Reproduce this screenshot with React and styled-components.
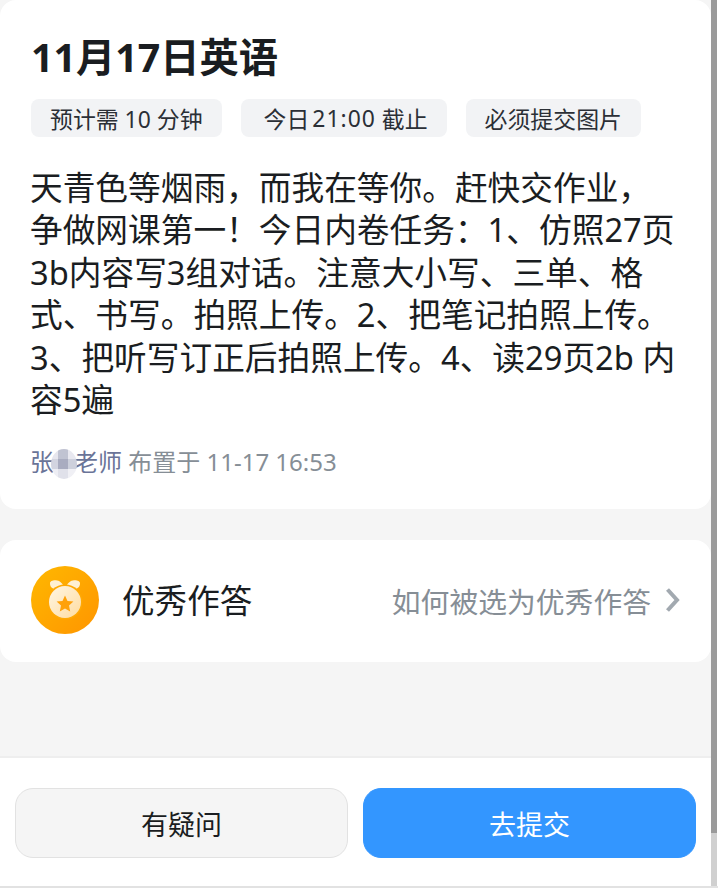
import styled, { createGlobalStyle } from 'styled-components';

const GlobalStyle = createGlobalStyle`
  html, body {
    margin: 0;
    padding: 0;
    height: 100%;
    overflow: hidden;
  }
  body {
    background: #fff;
    font-family: "Noto Sans", "Noto Sans CJK SC", sans-serif;
  }
  #root {
    height: 100%;
  }
`;

// mosaic colours of the hidden name, row by row
const mosaic = [
  '#e6e6ee', '#c0c3d2', '#e8e8f0',
  '#d2d4e0', '#a9acc0', '#cdd0dc',
  '#eeeef4', '#e0e1ea', '#f0f0f5',
];

const App = () => {
  return (
    <Page>
      <GlobalStyle />
      <Content>
        <TaskCard>
          <Title>11月17日英语</Title>
          <TagRow>
            <Tag>预计需 10 分钟</Tag>
            <Tag $left={23}>今日<Num>21:00</Num> 截止</Tag>
            <Tag>必须提交图片</Tag>
          </TagRow>
          <Description>
            天青色等烟雨，而我在等你。赶快交作业，<br />
            争做网课第一！今日内卷任务：1、仿照27页<br />
            3b内容写3组对话。注意大小写、三单、格<br />
            式、书写。拍照上传。2、把笔记拍照上传。<br />
            3、把听写订正后拍照上传。4、读29页2b 内<br />
            容5遍
          </Description>
          <Meta>
            <Teacher>
              张
              <BlurName>
                {mosaic.map((color, i) => (
                  <BlurCell key={i} $color={color} />
                ))}
              </BlurName>
              老师
            </Teacher>{' '}
            布置于 11-17 16:53
          </Meta>
        </TaskCard>

        <AnswerCard>
          <AnswerLeft>
            <MedalIcon />
            <AnswerTitle>优秀作答</AnswerTitle>
          </AnswerLeft>
          <AnswerLink>
            如何被选为优秀作答
            <Chevron />
          </AnswerLink>
        </AnswerCard>
      </Content>

      <Footer>
        <QuestionButton>有疑问</QuestionButton>
        <SubmitButton>去提交</SubmitButton>
      </Footer>

      <ScrollTrack>
        <ScrollThumb />
      </ScrollTrack>
    </Page>
  );
};

const MedalIcon = () => (
  <MedalSvg viewBox="0 0 68 68">
    <defs>
      <linearGradient id="medalBg" x1="0" y1="0" x2="1" y2="1">
        <stop offset="0" stopColor="#ffb800" />
        <stop offset="1" stopColor="#ff9500" />
      </linearGradient>
      <linearGradient id="medalFace" x1="0" y1="0" x2="1" y2="1">
        <stop offset="0" stopColor="#fff6e4" />
        <stop offset="1" stopColor="#ffdca0" />
      </linearGradient>
    </defs>
    <circle cx="34" cy="34" r="34" fill="url(#medalBg)" />
    <path d="M19 17.500C19 14.500 23 14 26 14.500C30 15 33 19 33.200 23.500C30 22 27 22 23 22.500C20.500 22.500 19 20 19 17.500Z" fill="#fff0d2" />
    <path d="M49 17.500C49 14.500 45 14 42 14.500C38 15 35 19 34.800 23.500C38 22 41 22 45 22.500C47.500 22.500 49 20 49 17.500Z" fill="#fff0d2" />
    <circle cx="34" cy="36" r="17.500" fill="#ffa905" />
    <circle cx="34" cy="36" r="16" fill="url(#medalFace)" />
    <path d="M34 29.500l2.500 5.400 5.900.7-4.400 4 1.200 5.900-5.200-3-5.200 3 1.200-5.900-4.400-4 5.900-.7z" fill="#ffa10a" />
  </MedalSvg>
);

const Chevron = () => (
  <ChevronSvg viewBox="0 0 16 26">
    <path d="M3.500 2.500L13 13 3.500 23.500" fill="none" stroke="#a2a9b0" strokeWidth="4" />
  </ChevronSvg>
);

export default App;

const Page = styled.div`
  position: relative;
  width: 718px;
  height: 888px;
  display: flex;
  flex-direction: column;
  overflow: hidden;
  border-bottom: 2px solid #e2e2e2;
  box-sizing: border-box;
`;

const Content = styled.main`
  flex: 1;
  width: 711px;
  display: flex;
  flex-direction: column;
  gap: 31px;
  background: #f5f5f5;
`;

const TaskCard = styled.section`
  height: 509px;
  box-sizing: border-box;
  padding: 32px 31px 0 30px;
  background: #fff;
  border-radius: 16px;
`;

const Title = styled.h1`
  margin: 0 0 0 1px;
  font-size: 39.300px;
  line-height: 50px;
  font-weight: 700;
  color: #1a1d21;
`;

const TagRow = styled.div`
  display: flex;
  gap: 19px;
  margin: 17px 0 0 1px;
`;

const Tag = styled.span`
  height: 38px;
  display: flex;
  align-items: center;
  padding: 0 19px 0 ${(props) => props.$left || 19}px;
  font-size: 22.900px;
  white-space: pre;
  color: #2b2f36;
  background: #f2f3f5;
  border-radius: 8px;
`;

const Num = styled.span`
  letter-spacing: 1px;
  margin-left: 3px;
`;

const Description = styled.p`
  margin: 30px 0 0;
  font-size: 32.700px;
  line-height: 42.400px;
  white-space: nowrap;
  color: #1a1d21;
`;

const Meta = styled.div`
  margin-top: 24px;
  font-size: 24px;
  line-height: 34px;
  color: #868e96;
`;

const Teacher = styled.span`
  color: #6a7498;
`;

const BlurName = styled.span`
  position: relative;
  top: 4px;
  display: inline-grid;
  grid-template-columns: 7px 10px 9px;
  grid-template-rows: 10px 10px 10px;
  width: 26px;
  height: 30px;
  margin: 0 -3px;
  vertical-align: top;
  border-radius: 50%;
  overflow: hidden;
`;

const BlurCell = styled.span`
  background: ${(props) => props.$color};
`;

const AnswerCard = styled.section`
  height: 122px;
  box-sizing: border-box;
  padding: 0 31px 2px 31px;
  display: flex;
  align-items: center;
  justify-content: space-between;
  background: #fff;
  border-radius: 16px;
`;

const AnswerLeft = styled.div`
  display: flex;
  align-items: center;
  gap: 23px;
`;

const MedalSvg = styled.svg`
  width: 68px;
  height: 68px;
  display: block;
`;

const AnswerTitle = styled.span`
  font-size: 32.600px;
  padding-bottom: 3px;
  color: #1a1d21;
`;

const AnswerLink = styled.span`
  display: flex;
  align-items: center;
  gap: 13px;
  font-size: 28.800px;
  color: #868e96;
`;

const ChevronSvg = styled.svg`
  width: 16px;
  height: 26px;
  display: block;
`;

const Footer = styled.footer`
  width: 711px;
  box-sizing: border-box;
  height: 130px;
  padding: 30px 15px 0;
  display: flex;
  gap: 15px;
  background: #fff;
  border-top: 2px solid #eeeeee;
`;

const BaseButton = styled.button`
  flex: 1;
  height: 70px;
  padding: 1px 0 0;
  border-radius: 18px;
  font-family: inherit;
  font-size: 27px;
`;

const QuestionButton = styled(BaseButton)`
  background: #f5f5f5;
  color: #1a1d21;
  border: 1px solid #e2e2e2;
`;

const SubmitButton = styled(BaseButton)`
  background: #3396ff;
  color: #fff;
  border: 1px solid #3396ff;
`;

const ScrollTrack = styled.div`
  position: absolute;
  top: 0;
  right: 1px;
  bottom: 0;
  width: 6px;
  background: #d0d0d0;
`;

const ScrollThumb = styled.div`
  width: 100%;
  height: 833px;
  background: #9a9a9a;
`;
